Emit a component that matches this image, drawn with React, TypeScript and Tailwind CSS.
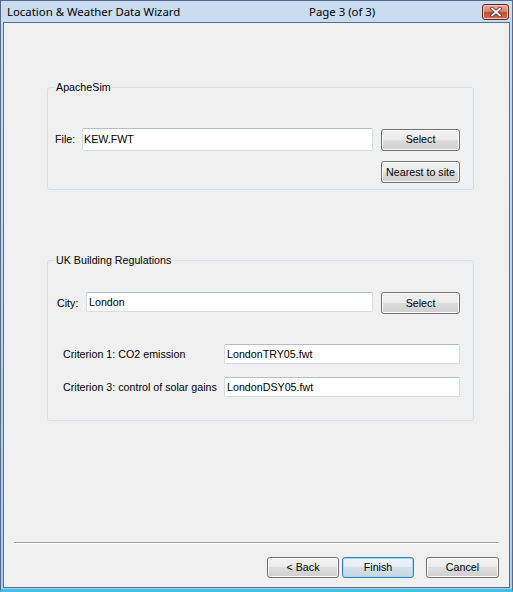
import React from "react";

// Vista-style push button
const Btn = ({
  label,
  className = "",
  primary = false,
}: {
  label: string;
  className?: string;
  primary?: boolean;
}) => (
  <button
    className={
      "flex items-center justify-center rounded-[3px] border text-[10.7px] leading-none text-black " +
      (primary
        ? "border-[#3c7fb1] bg-[linear-gradient(to_bottom,#eef5fa_0%,#e4eef5_50%,#d3e2ec_50%,#c6d8e4_100%)] shadow-[inset_0_0_0_1px_#9fdcf6] "
        : "border-[#707070] bg-[linear-gradient(to_bottom,#f2f2f2_0%,#ebebeb_50%,#dddddd_50%,#cfcfcf_100%)] shadow-[inset_0_0_0_1px_#fbfbfb] ") +
      className
    }
  >
    {label}
  </button>
);

// single-line edit box
const Field = ({ value, className = "" }: { value: string; className?: string }) => (
  <div
    className={
      "flex items-center rounded-[2px] border border-[#d6dbe2] border-t-[#b6bcc6] bg-white text-[10.7px] text-black " +
      className
    }
  >
    {value}
  </div>
);

const CloseButton = () => (
  <div className="flex h-[16px] w-[27px] items-center justify-center rounded-[3px] border border-[#5e2520] bg-[linear-gradient(to_bottom,#e9a999_0%,#d98470_45%,#c24a36_55%,#d0705c_100%)] shadow-[inset_0_0_0_1px_#f0c4b8]">
    <svg width="12" height="10" viewBox="0 0 12 10">
      <path d="M2 1.5L10 8.5M10 1.5L2 8.5" stroke="#5a2a24" strokeWidth="3.4" strokeLinecap="square" />
      <path d="M2 1.5L10 8.5M10 1.5L2 8.5" stroke="#ffffff" strokeWidth="1.8" strokeLinecap="square" />
    </svg>
  </div>
);

const App = () => {
  return (
    <div
      className="flex h-[592px] w-[513px] flex-col border-x border-t border-b-[3px] border-[#56698a] border-b-[#3fc0e6] bg-[linear-gradient(to_bottom,#c9dcf0_0%,#b9d1ea_60%,#a9cce8_100%)] px-[2px] pb-[1px]"
      style={{ fontFamily: '"Liberation Sans", Arial, sans-serif' }}
    >
      {/* title bar */}
      <div className="flex h-[21px] shrink-0 items-center pt-[1px]">
        <span
          className="ml-[4px] w-[302px] text-[11.4px] text-black"
          style={{ fontFamily: '"Noto Sans", sans-serif' }}
        >
          Location &amp; Weather Data Wizard
        </span>
        <span className="text-[11.4px] text-black" style={{ fontFamily: '"Noto Sans", sans-serif' }}>
          Page 3 (of 3)
        </span>
        <div className="ml-auto mr-[1px]">
          <CloseButton />
        </div>
      </div>

      {/* client area */}
      <div className="flex flex-1 flex-col border border-[#5b6e89] bg-[#f0f0f0] text-[10.7px]">
        <fieldset className="ml-[43px] mt-[58px] h-[109px] w-[427px] rounded-[3px] border border-[#d5dfe5]">
          <legend className="ml-[7px] px-[1px] leading-[13px] text-black">ApacheSim</legend>
          <div className="mt-[34px] flex items-center pl-[7px]">
            <span className="w-[27px] text-black">File:</span>
            <Field value="KEW.FWT" className="h-[23px] w-[291px] pl-[1px]" />
            <Btn label="Select" className="ml-[8px] h-[22px] w-[79px]" />
          </div>
          <Btn label="Nearest to site" className="ml-[333px] mt-[10px] h-[22px] w-[79px]" />
        </fieldset>

        <fieldset className="ml-[43px] mt-[64px] h-[167px] w-[427px] rounded-[3px] border border-[#d5dfe5]">
          <legend className="ml-[7px] px-[1px] leading-[13px] text-black">UK Building Regulations</legend>
          <div className="mt-[25px] flex items-start pl-[9px]">
            <span className="mt-[3px] w-[29px] text-black">City:</span>
            <Field value="London" className="h-[20px] w-[287px] pl-[2px]" />
            <Btn label="Select" className="ml-[8px] h-[22px] w-[79px]" />
          </div>
          <div className="mt-[30px] flex items-center pl-[15px]">
            <span className="w-[161px] text-black">Criterion 1: CO2 emission</span>
            <Field value="LondonTRY05.fwt" className="h-[20px] w-[236px] pl-[2px]" />
          </div>
          <div className="mt-[13px] flex items-center pl-[15px]">
            <span className="w-[161px] text-black">Criterion 3: control of solar gains</span>
            <Field value="LondonDSY05.fwt" className="h-[20px] w-[236px] pl-[2px]" />
          </div>
        </fieldset>

        <div className="ml-[10px] mt-[121px] w-[485px] border-b border-t border-b-white border-t-[#a0a0a0]" />

        <div className="mt-[13px] flex">
          <Btn label="< Back" className="ml-[263px] h-[21px] w-[72px]" />
          <Btn label="Finish" primary className="ml-[3px] h-[21px] w-[72px]" />
          <Btn label="Cancel" className="ml-[12px] h-[21px] w-[73px]" />
        </div>
      </div>
    </div>
  );
};

export default App;
